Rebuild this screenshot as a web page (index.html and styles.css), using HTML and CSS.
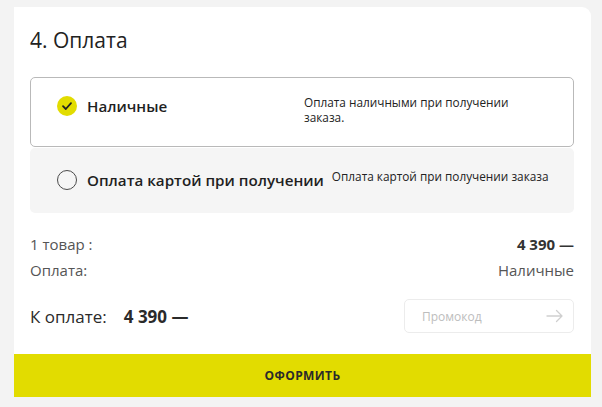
FILE: index.html
```html
<!DOCTYPE html>
<html lang="ru">
<head>
<meta charset="utf-8">
<link rel="stylesheet" href="styles.css">
</head>
<body>
<div class="page">
  <section class="card">
    <div class="inner">
      <h2 class="title">4. Оплата</h2>
      <div class="options">
        <div class="option option--active">
          <div class="label">
            <span class="radio radio--checked">
              <svg width="12" height="10" viewBox="0 0 12 10"><path d="M2 5.2 L4.8 8 L10 2.2" fill="none" stroke="#222" stroke-width="1.8" stroke-linecap="round" stroke-linejoin="round"/></svg>
            </span>
            <span class="name">Наличные</span>
          </div>
          <div class="desc">Оплата наличными при получении заказа.</div>
        </div>
        <div class="option option--idle">
          <div class="label">
            <span class="radio"></span>
            <span class="name">Оплата картой при получении</span>
          </div>
          <div class="desc">Оплата картой при получении заказа</div>
        </div>
      </div>
      <div class="summary">
        <div class="row"><span class="muted">1 товар :</span><span class="strong">4 390 —</span></div>
        <div class="row"><span class="muted">Оплата:</span><span class="muted">Наличные</span></div>
      </div>
      <div class="total">
        <div class="total-text"><span class="total-label">К оплате:</span><span class="total-sum">4 390 —</span></div>
        <div class="promo">
          <span class="promo-ph">Промокод</span>
          <svg width="18" height="14" viewBox="0 0 18 14"><path d="M1 7 H16 M10.5 1.5 L16 7 L10.5 12.5" fill="none" stroke="#cfcfcf" stroke-width="1.3" stroke-linecap="round" stroke-linejoin="round"/></svg>
        </div>
      </div>
    </div>
    <button class="submit">ОФОРМИТЬ</button>
  </section>
</div>
</body>
</html>
```
FILE: styles.css
```css
* { box-sizing: border-box; }
html, body { margin: 0; padding: 0; }
body {
  background: #f3f3f3;
  font-family: "Open Sans", "Noto Sans", sans-serif;
  color: #222;
  width: 602px;
  height: 407px;
  overflow: hidden;
}
.page {
  padding: 7px 11px 0 14px;
}
.card {
  background: #fff;
  border-radius: 0 9px 0 0;
  width: 577px;
}
.inner {
  padding: 19px 17px 0 16px;
}
.title {
  margin: 0;
  font-size: 21px;
  font-weight: 400;
  line-height: 28px;
  color: #222;
}
.options {
  margin-top: 23px;
  display: flex;
  flex-direction: column;
  gap: 1px;
}
.option {
  display: flex;
  align-items: flex-start;
  gap: 8px;
  border-radius: 5px;
}
.option--active {
  border: 1px solid #b9b9b9;
  height: 70px;
  padding-top: 17px;
  padding-left: 26px;
}
.option--idle {
  background: #f5f5f5;
  height: 65px;
  padding-top: 21px;
  padding-left: 27px;
}
.label {
  display: flex;
  align-items: center;
  gap: 10px;
  min-width: 239px;
  height: 22px;
}
.radio {
  width: 20px;
  height: 20px;
  border-radius: 50%;
  border: 1.5px solid #4a4a4a;
  display: flex;
  align-items: center;
  justify-content: center;
  flex-shrink: 0;
}
.radio--checked {
  border: none;
  background: #e2dc00;
}
.name {
  font-size: 15.2px;
  font-weight: 600;
  line-height: 22px;
  color: #1f1f1f;
  white-space: nowrap;
}
.desc {
  font-size: 11.8px;
  line-height: 15px;
  color: #222;
  max-width: 232px;
}
.summary {
  margin-top: 18px;
}
.row {
  display: flex;
  justify-content: space-between;
  align-items: center;
  height: 26px;
}
.muted {
  font-size: 15px;
  color: #555;
}
.strong {
  font-size: 15px;
  font-weight: 700;
  color: #333;
}
.total {
  margin-top: 16px;
  display: flex;
  justify-content: space-between;
  align-items: center;
  height: 34px;
  margin-bottom: 21px;
}
.total-text {
  display: flex;
  align-items: center;
  gap: 17px;
  font-size: 17px;
  color: #2a2a2a;
}
.total-sum {
  font-weight: 700;
}
.promo {
  width: 170px;
  height: 34px;
  border: 1px solid #ececec;
  border-radius: 5px;
  display: flex;
  align-items: center;
  justify-content: space-between;
  padding: 0 9px 0 17px;
}
.promo-ph {
  font-size: 12px;
  color: #bdbdbd;
}
.submit {
  display: block;
  width: 100%;
  height: 43px;
  border: none;
  background: #e2dc00;
  font-family: "Open Sans", "Noto Sans", sans-serif;
  font-size: 12px;
  font-weight: 700;
  letter-spacing: 0.4px;
  color: #2a2a2a;
  padding: 0;
}
```
